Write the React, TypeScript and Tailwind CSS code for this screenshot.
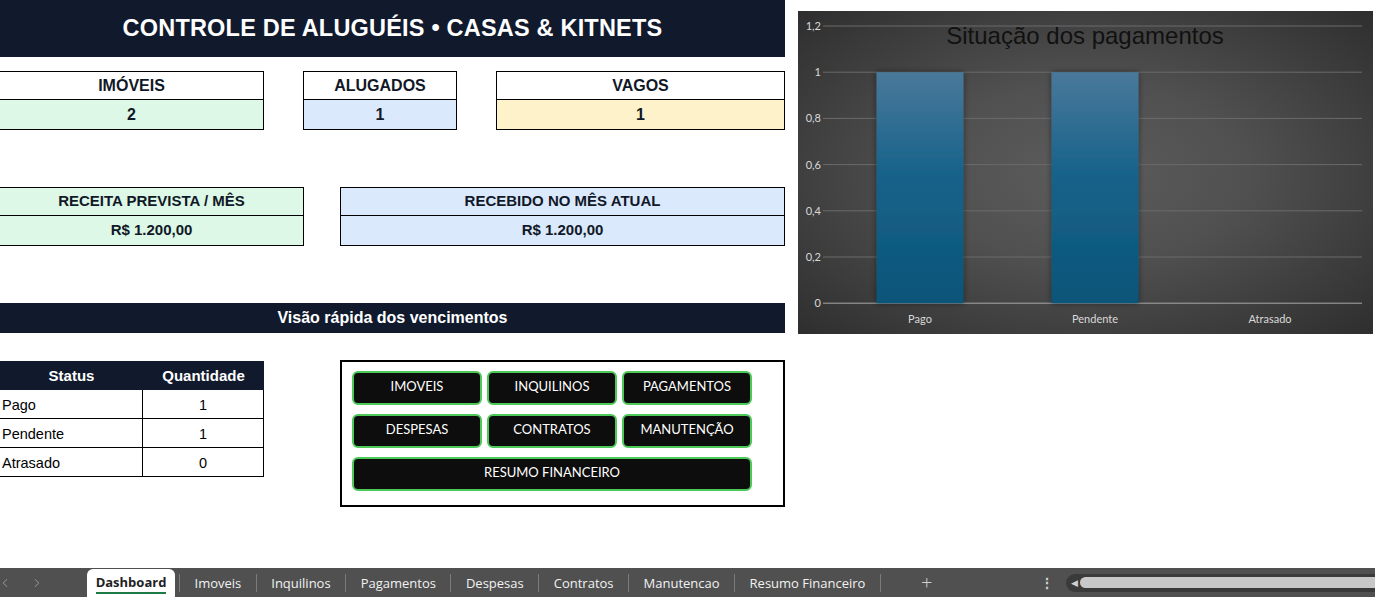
import React from 'react';
import { ChevronLeft, ChevronRight } from 'lucide-react';

const navy = 'bg-[#111a2d]';

const KpiBox = ({ label, value, w, bg, noLeft }: { label: string; value: string; w: string; bg: string; noLeft?: boolean }) => (
  <div className={`${w} border border-black ${noLeft ? 'border-l-0' : ''} flex flex-col`}>
    <div className="h-[28px] border-b border-black bg-white flex items-center justify-center text-[16px] font-bold text-[#111827]">
      {label}
    </div>
    <div className={`h-[29px] ${bg} flex items-center justify-center text-[16px] font-bold text-[#111827]`}>{value}</div>
  </div>
);

const MoneyBox = ({ label, value, w, bg, noLeft }: { label: string; value: string; w: string; bg: string; noLeft?: boolean }) => (
  <div className={`${w} border border-black ${noLeft ? 'border-l-0' : ''} flex flex-col`}>
    <div className={`h-[28px] border-b border-black ${bg} flex items-center justify-center text-[15px] font-bold text-[#111827]`}>
      {label}
    </div>
    <div className={`h-[29px] ${bg} flex items-center justify-center text-[15px] font-bold text-[#111827]`}>{value}</div>
  </div>
);

const NavButton = ({ label, wide }: { label: string; wide?: boolean }) => (
  <div
    className={`${wide ? 'col-span-3 w-[400px]' : 'w-[130px]'} h-[34px] rounded-[6px] border-2 border-[#4cc957] bg-[#0d0d0d] flex items-center justify-center text-white text-[13px] pb-[3px]`}
    style={{ fontFamily: 'Lato, "Open Sans", sans-serif' }}
  >
    {label}
  </div>
);

const statusRows = [
  { status: 'Pago', qty: 1 },
  { status: 'Pendente', qty: 1 },
  { status: 'Atrasado', qty: 0 },
];

const Chart = () => {
  const ticks = ['1,2', '1', '0,8', '0,6', '0,4', '0,2', '0'];
  const y0 = 15;
  const step = 46.2;
  const bars = [
    { name: 'Pago', value: 1, cx: 122 },
    { name: 'Pendente', value: 1, cx: 297 },
    { name: 'Atrasado', value: 0, cx: 472 },
  ];
  const base = y0 + step * 6;
  return (
    <div className="w-[575px] h-[323px] bg-[radial-gradient(ellipse_at_center,#5c5c5c_0%,#505050_40%,#2e2e2e_100%)]">
      <svg width="575" height="323" viewBox="0 0 575 323" style={{ fontFamily: 'Lato, "Open Sans", sans-serif' }}>
        <defs>
          <linearGradient id="barGrad" x1="0" y1="0" x2="0" y2="1">
            <stop offset="0%" stopColor="#49799a" />
            <stop offset="45%" stopColor="#17628a" />
            <stop offset="100%" stopColor="#0b5478" />
          </linearGradient>
          <filter id="barShadow" x="-20%" y="-5%" width="140%" height="110%">
            <feDropShadow dx="0" dy="0" stdDeviation="3" floodColor="#000" floodOpacity="0.45" />
          </filter>
        </defs>
        {ticks.map((t, i) => (
          <g key={t}>
            <line
              x1="25"
              x2="564"
              y1={y0 + step * i}
              y2={y0 + step * i}
              stroke={i === 6 ? '#a8a8a8' : '#6b6b6b'}
              strokeWidth="1"
            />
            <text x="23" y={y0 + step * i + 4} fontSize="11" fill="#d9d9d9" textAnchor="end">
              {t}
            </text>
          </g>
        ))}
        {bars.map((b) =>
          b.value > 0 ? (
            <rect
              key={b.name}
              x={b.cx - 43.5}
              y={base - b.value * step * 5}
              width="87"
              height={b.value * step * 5}
              fill="url(#barGrad)"
              filter="url(#barShadow)"
            />
          ) : null
        )}
        {bars.map((b) => (
          <text key={b.name + 'l'} x={b.cx} y="312" fontSize="11" fill="#d9d9d9" textAnchor="middle">
            {b.name}
          </text>
        ))}
        <text
          x="287"
          y="33"
          fontSize="24"
          fill="#111111"
          textAnchor="middle"
          style={{ fontFamily: '"Liberation Sans", Arial, sans-serif' }}
        >
          Situação dos pagamentos
        </text>
      </svg>
    </div>
  );
};

const tabs = ['Imoveis', 'Inquilinos', 'Pagamentos', 'Despesas', 'Contratos', 'Manutencao', 'Resumo Financeiro'];

const TabBar = () => (
  <div className="h-[29px] bg-[#505050] flex items-end text-[13px]" style={{ fontFamily: '"Open Sans", sans-serif' }}>
    <div className="h-full flex items-center text-[#a0a0a0]">
      <ChevronLeft size={14} strokeWidth={1.5} className="ml-[-2px]" />
      <ChevronRight size={14} strokeWidth={1.5} className="ml-[18px]" />
    </div>
    <div className="ml-[43px] h-[28px] w-[88px] bg-white rounded-t-[6px] flex flex-col items-center justify-center">
      <span className="font-bold text-[#222] leading-[18px]">Dashboard</span>
      <span className="w-[70px] h-[2px] bg-[#1e7a45] mt-[1px]" />
    </div>
    <div className="h-full flex items-center text-[#f2f2f2]">
      <span className="w-px h-[18px] bg-[#7a7a7a] ml-[4px]" />
      {tabs.map((t) => (
        <React.Fragment key={t}>
          <span className="px-[14.5px] pt-[3px]">{t}</span>
          <span className="w-px h-[18px] bg-[#7a7a7a]" />
        </React.Fragment>
      ))}
      <span className="ml-[40px] text-[20px] font-light text-[#d0d0d0] leading-none">+</span>
      <span className="ml-[108px] text-[14px] text-[#d0d0d0] leading-none font-bold">⋮</span>
    </div>
    <div className="h-full flex-1 flex items-center ml-[12px]">
      <div className="h-[18px] flex-1 bg-[#3a3a3a] rounded-l-full flex items-center pl-[5px]">
        <span className="text-[#d0d0d0] text-[9px] leading-none">◀</span>
        <div className="ml-[2px] h-[11px] flex-1 bg-[#c8c8c8] rounded-l-full" />
      </div>
    </div>
  </div>
);

export default function App() {
  return (
    <div className="w-[1375px] h-[597px] bg-white flex flex-col overflow-hidden" style={{ fontFamily: '"Liberation Sans", Arial, sans-serif' }}>
      <div className="flex-1 flex">
        <div className="w-[785px] flex flex-col">
          <div className={`h-[57px] ${navy} flex items-center justify-center text-white text-[23.5px] font-bold tracking-[0.2px]`}>
            CONTROLE DE ALUGUÉIS • CASAS &amp; KITNETS
          </div>

          <div className="mt-[14px] flex">
            <KpiBox label="IMÓVEIS" value="2" w="w-[264px]" bg="bg-[#ddf8e6]" noLeft />
            <div className="ml-[39px]">
              <KpiBox label="ALUGADOS" value="1" w="w-[154px]" bg="bg-[#dbe9fd]" />
            </div>
            <div className="ml-[39px]">
              <KpiBox label="VAGOS" value="1" w="w-[289px]" bg="bg-[#fdf2c9]" />
            </div>
          </div>

          <div className="mt-[57px] flex">
            <MoneyBox label="RECEITA PREVISTA / MÊS" value="R$ 1.200,00" w="w-[304px]" bg="bg-[#ddf8e6]" noLeft />
            <div className="ml-[36px]">
              <MoneyBox label="RECEBIDO NO MÊS ATUAL" value="R$ 1.200,00" w="w-[445px]" bg="bg-[#dbe9fd]" />
            </div>
          </div>

          <div className={`mt-[57px] h-[30px] ${navy} flex items-center justify-center text-white text-[16px] font-bold`}>
            Visão rápida dos vencimentos
          </div>

          <div className="mt-[27px] flex items-start">
            <div className="w-[264px] mt-[1px]">
              <div className={`h-[29px] ${navy} flex text-white text-[15px] font-bold`}>
                <div className="w-[143px] flex items-center justify-center pt-[1px]">Status</div>
                <div className="flex-1 flex items-center justify-center pt-[1px]">Quantidade</div>
              </div>
              {statusRows.map((r) => (
                <div key={r.status} className="h-[29px] flex border-b border-r border-black text-[14.5px] text-black">
                  <div className="w-[143px] border-r border-black flex items-center pl-[2px] pt-[4px]">{r.status}</div>
                  <div className="flex-1 flex items-center justify-center pt-[4px]">{r.qty}</div>
                </div>
              ))}
            </div>

            <div className="ml-[76px] w-[445px] h-[147px] border-2 border-black pl-[10px] pt-[9px]">
              <div className="grid grid-cols-[130px_130px_130px] gap-x-[5px] gap-y-[9px]">
                <NavButton label="IMOVEIS" />
                <NavButton label="INQUILINOS" />
                <NavButton label="PAGAMENTOS" />
                <NavButton label="DESPESAS" />
                <NavButton label="CONTRATOS" />
                <NavButton label="MANUTENÇÃO" />
                <NavButton label="RESUMO FINANCEIRO" wide />
              </div>
            </div>
          </div>
        </div>

        <div className="ml-[13px] mt-[11px]">
          <Chart />
        </div>
      </div>
      <TabBar />
    </div>
  );
}
